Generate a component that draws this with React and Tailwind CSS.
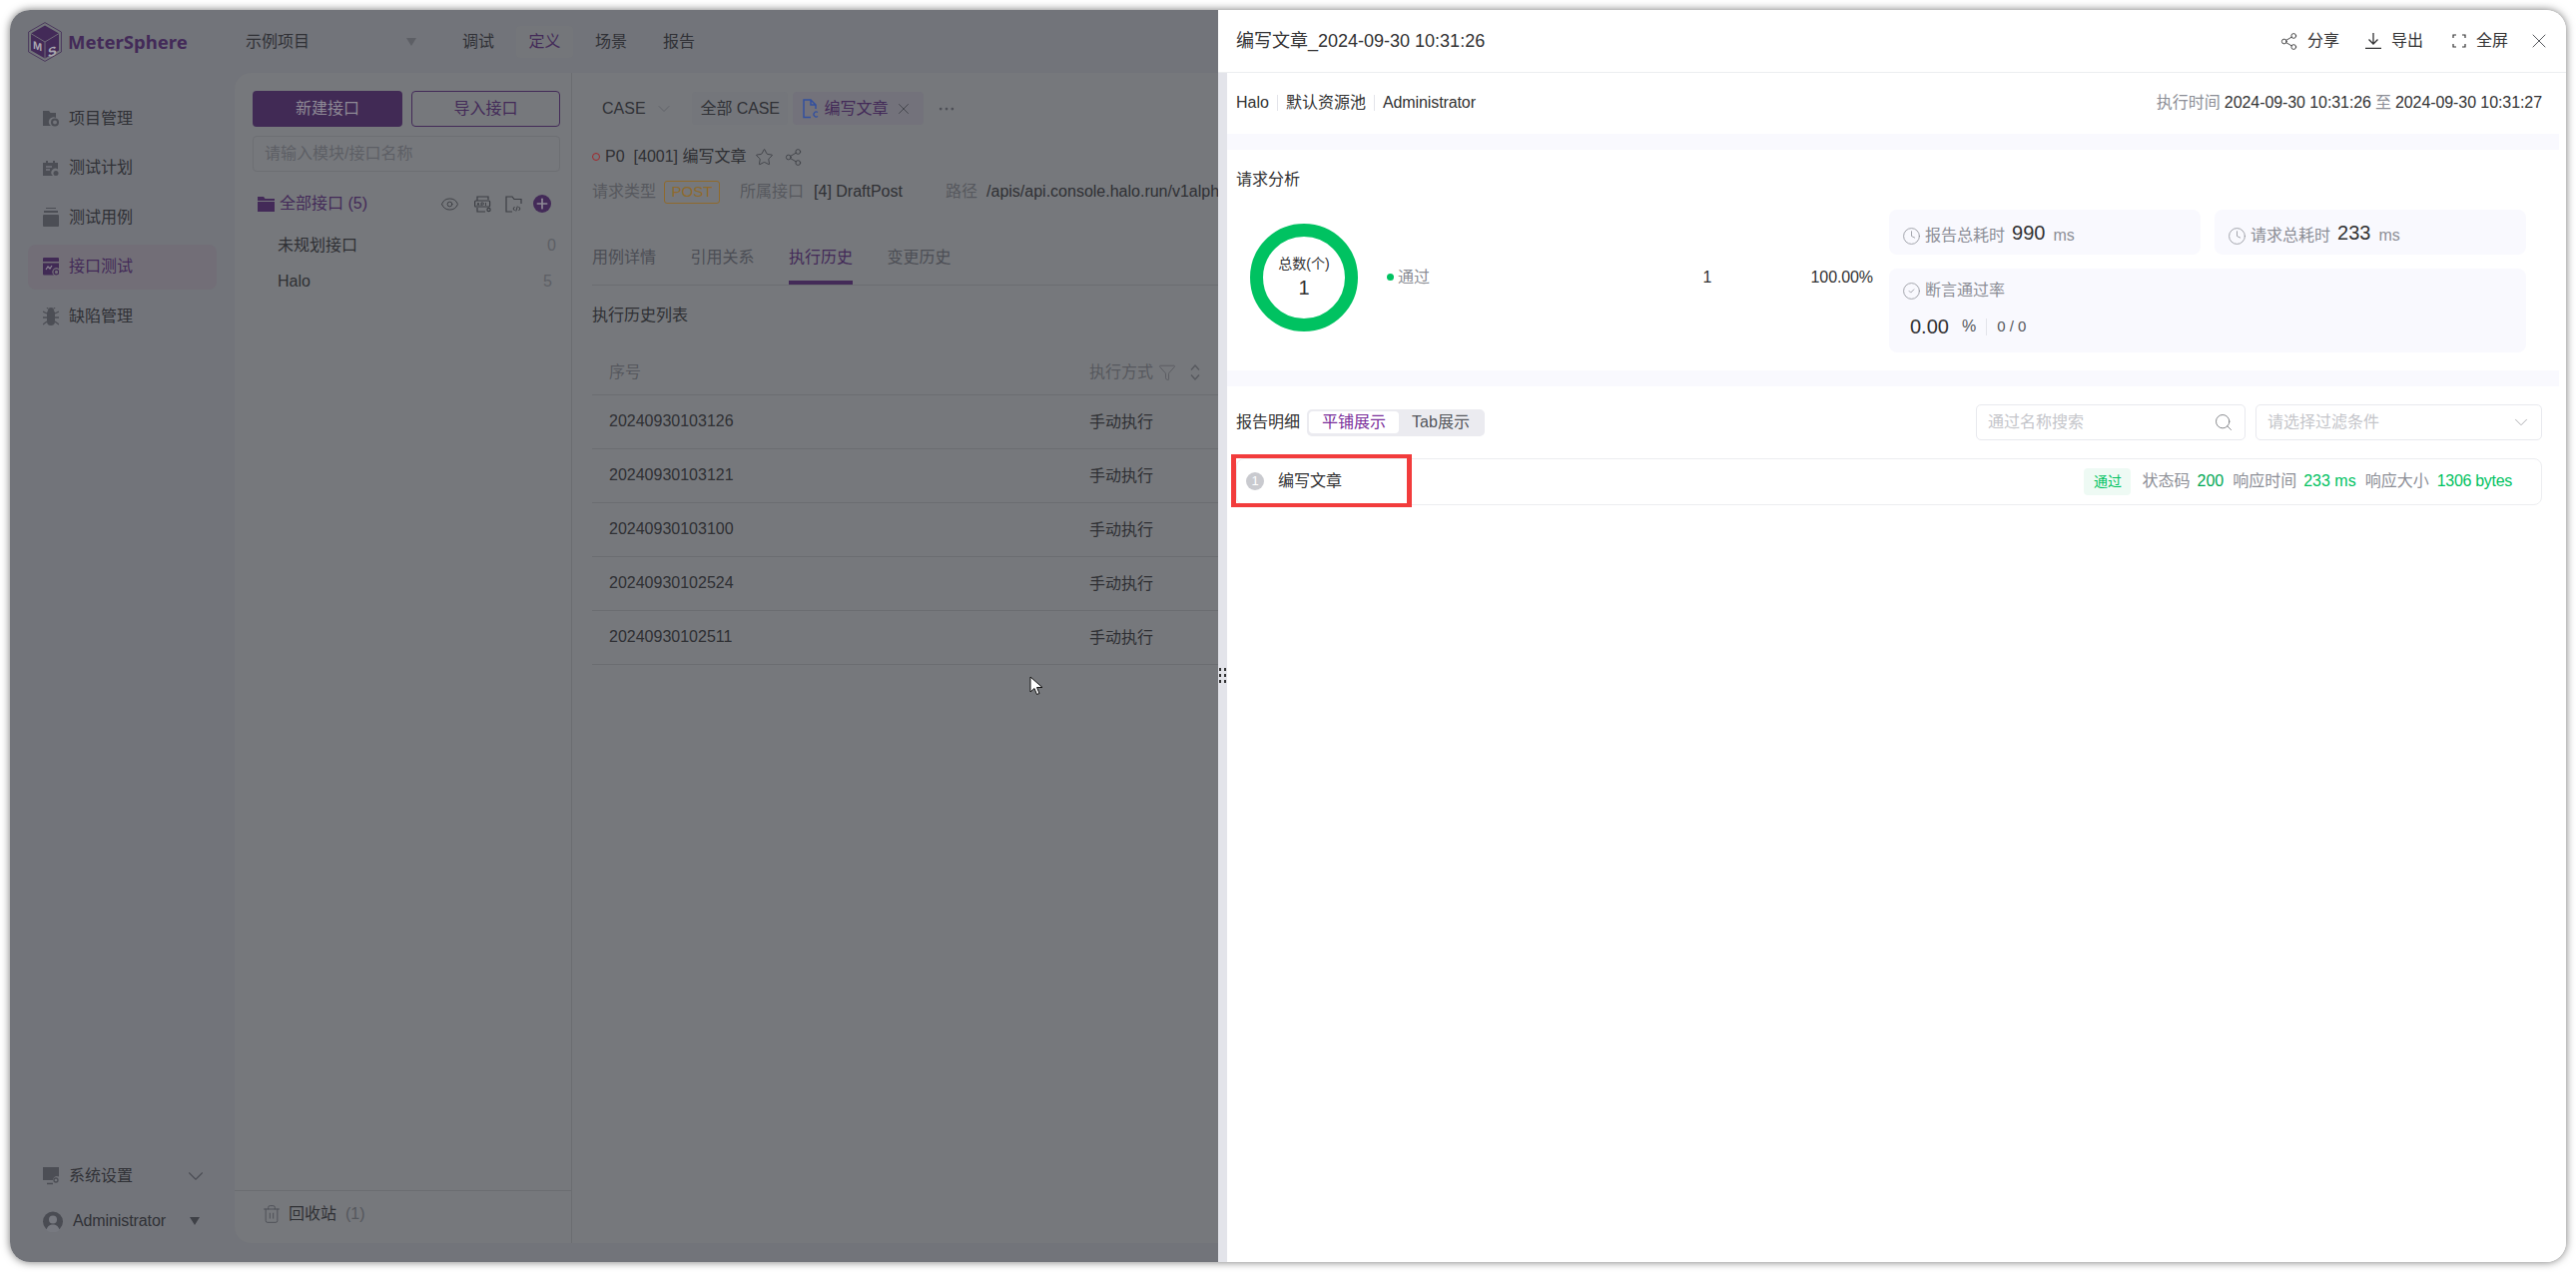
import React from 'react';
import { Eye, Star, Share2, X, ChevronDown, Search, Clock, CircleCheck, Trash2, Funnel, Plus, Ellipsis } from 'lucide-react';

const Logo = () => (
  <svg width="34" height="40" viewBox="0 0 34 40" className="shrink-0">
    <path d="M17 .6 33.4 10v20L17 39.4.6 30V10z" fill="none" stroke="#4c3a5e" strokeWidth="1" />
    <path d="M17 3.5 31 11.6v16.8L17 36.5 3 28.4V11.6z" fill="#432a58" />
    <path d="M17 20 3 11.6M17 20l14-8.4M17 20v16.5" stroke="#6f6a78" strokeWidth="1" />
    <text x="5" y="29" fontSize="11" fontWeight="700" fill="#a9a6b0" fontFamily="Liberation Sans" transform="skewY(18) translate(0 -4)">M</text>
    <text x="20" y="36" fontSize="13" fontWeight="700" fill="#a9a6b0" fontFamily="Liberation Sans" transform="skewY(-18) translate(0 6)">S</text>
  </svg>
);

const IconProject = () => (
  <svg width="16" height="17" viewBox="0 0 16 17"><path d="M0 1h6l1.500 2H13v5a4.500 4.500 0 0 0-5 8H0z" fill="#4c4e55" /><circle cx="12" cy="12.500" r="3" fill="none" stroke="#4c4e55" strokeWidth="2" /></svg>
);
const IconPlan = () => (
  <svg width="16" height="17" viewBox="0 0 16 17"><path d="M0 3h3V1h2v2h5V1h2v2h3v6.500a4 4 0 0 0-5 6.500H0z" fill="#4c4e55" /><path d="M3 7h6M3 10h4" stroke="#74767d" strokeWidth="1.400" /><circle cx="13" cy="13.500" r="2.500" fill="#4c4e55" /></svg>
);
const IconCase = () => (
  <svg width="16" height="19" viewBox="0 0 16 19"><path d="M3 0h10v1H3zM1 3h14v2H1z" fill="#4c4e55" /><rect y="7" width="16" height="12" rx="1" fill="#4c4e55" /></svg>
);
const IconApi = () => (
  <svg width="16" height="18" viewBox="0 0 16 18"><path d="M1 0h14a1 1 0 0 1 1 1v3H0V1a1 1 0 0 1 1-1zM0 5.500h16V11a4 4 0 0 0-5 6.500H1a1 1 0 0 1-1-1z" fill="#412a55" /><path d="M3 12l2-3 2 2 2-3" stroke="#8a8592" strokeWidth="1.200" fill="none" /><circle cx="13.500" cy="14.500" r="2.300" fill="none" stroke="#412a55" strokeWidth="1.300" /></svg>
);
const IconBug = () => (
  <svg width="16" height="18" viewBox="0 0 16 18"><path d="M5 3a3 3 0 0 1 6 0l1 2v9a4 4 0 0 1-8 0V5z" fill="#4c4e55" /><path d="M4 6 0 4M12 6l4-2M4 10H0M12 10h4M4 14l-4 3M12 14l4 3M5 1 4 0M11 1l1-1" stroke="#4c4e55" strokeWidth="1.300" /></svg>
);
const IconSettings = () => (
  <svg width="16" height="18" viewBox="0 0 16 18"><path d="M0 0h16v9.500a4 4 0 0 0-6 3.500H0z" fill="#4c4e55" /><path d="M4 16.500h6" stroke="#4c4e55" strokeWidth="1.500" /><circle cx="13" cy="13" r="2" fill="none" stroke="#4c4e55" strokeWidth="1.300" /></svg>
);
const IconUser = () => (
  <svg width="20" height="21" viewBox="0 0 20 21"><circle cx="10" cy="10.500" r="10" fill="#4a4c53" /><circle cx="10" cy="8.500" r="4" fill="#777980" /><path d="M3.500 19c.8-4 3.500-5.500 6.500-5.500s5.700 1.500 6.500 5.500a10 10 0 0 1-13 0z" fill="#777980" /></svg>
);
const IconFolder = () => (
  <svg width="17" height="16" viewBox="0 0 17 16"><path d="M0 1h6l1.500 2H17v2H0z" fill="#432a58" /><path d="M0 6h17v10H0z" fill="#432a58" /></svg>
);
const IconApiDoc = () => (
  <svg width="17" height="17" viewBox="0 0 17 17" fill="none" stroke="#3d3f45" strokeWidth="1.200"><path d="M3 5V1h11v3M3 12v4h8" /><rect x=".6" y="5" width="15" height="6" rx="1" /><path d="M3 10l1-3 1 3M7 10V7h1.500a1 1 0 0 1 0 2H7M11.500 7v3" strokeWidth=".9" /><circle cx="14.500" cy="14" r="1.600" /></svg>
);
const IconFolderCode = () => (
  <svg width="17" height="17" viewBox="0 0 17 17" fill="none" stroke="#3d3f45" strokeWidth="1.200"><path d="M7 16H1V1h6l2 2.500h7V8" /><path d="M9.500 11 8 13l1.500 2M13.500 11l1.500 2-1.500 2M12.300 10.500l-1.500 5" strokeWidth="1" /></svg>
);
const IconFileC = () => (
  <svg width="16" height="20" viewBox="0 0 16 20" fill="none" stroke="#33509f" strokeWidth="1.500"><path d="M8 18.500H1V1h7l5 5v4M8 1v5h5" /><path d="M15 13.500a2.500 2.500 0 1 0 0 4" strokeWidth="1.300" /></svg>
);
const IconExpand = () => (
  <svg width="14" height="14" viewBox="0 0 14 14" fill="none" stroke="#323233" strokeWidth="1.200"><path d="M1 4V1h3M10 1h3v3M1 10v3h3M10 13h3v-3" /></svg>
);
const IconDownload = () => (
  <svg width="16" height="16" viewBox="0 0 16 16" fill="none" stroke="#323233" strokeWidth="1.300"><path d="M8 0v11M3.500 6.500 8 11l4.500-4.500M0 15.300h16" /></svg>
);
const IconSort = () => (
  <svg width="10" height="16" viewBox="0 0 10 16" fill="none" stroke="#56585e" strokeWidth="1.300"><path d="M1 5.500 5 1l4 4.500M1 10.500 5 15l4-4.500" /></svg>
);
const Triangle = ({ className }) => (
  <svg width="10" height="8" viewBox="0 0 10 8" className={className}><path d="M0 0h10L5 8z" fill="currentColor" /></svg>
);
const Cursor = () => (
  <svg width="14" height="20" viewBox="0 0 14 20"><path d="M1 1v15l4-3.500 2.500 6 2.500-1-2.500-6H13z" fill="#fff" stroke="#111" strokeWidth="1" /></svg>
);

const navItems = [
  ['项目管理', <IconProject />],
  ['测试计划', <IconPlan />],
  ['测试用例', <IconCase />],
  ['接口测试', <IconApi />, true],
  ['缺陷管理', <IconBug />],
];

const rows = ['20240930103126', '20240930103121', '20240930103100', '20240930102524', '20240930102511'];

const Sidebar = () => (
  <aside className="w-[225px] shrink-0 flex flex-col pt-[23px] pb-[26px]">
    <nav className="flex flex-col gap-[4.500px] px-[18px]">
      {navItems.map(([label, icon, active]) => (
        <div key={label} className={`h-[45px] flex items-center gap-[10px] pl-[15px] rounded-[8px] ${active ? 'bg-[#726e77] text-[#432a58]' : 'text-[#303136]'}`}>
          <span className="w-[16px] flex justify-center">{icon}</span>
          <span>{label}</span>
        </div>
      ))}
    </nav>
    <div className="mt-auto flex flex-col gap-[15px] pl-[33px] pr-[26px]">
      <div className="h-[30px] flex items-center gap-[10px] text-[#303136]">
        <IconSettings />
        <span>系统设置</span>
        <ChevronDown size={26} strokeWidth={1} className="ml-auto text-[#4c4e55]" />
      </div>
      <div className="h-[30px] flex items-center gap-[10px] text-[#303136]">
        <IconUser />
        <span className="tracking-[-0.1px]">Administrator</span>
        <Triangle className="ml-auto mr-[9px] text-[#3f4147]" />
      </div>
    </div>
  </aside>
);

const ModulePanel = () => (
  <section className="w-[338px] shrink-0 flex flex-col bg-[#76787c] rounded-l-[16px] border-r border-[#6b6d71]">
    <div className="flex-1 pl-[18px] pr-[11px] pt-[18px]">
      <div className="flex gap-[9px]">
        <button className="w-[150px] h-[36px] rounded-[4px] bg-[#412a55] text-[#8f8a96]">新建接口</button>
        <button className="w-[149px] h-[36px] rounded-[4px] border border-[#432a58] text-[#432a58]">导入接口</button>
      </div>
      <div className="mt-[9px] h-[36px] w-[308px] rounded-[4px] border border-[#6d6f73] pl-[11px] flex items-center text-[#5d5f65]">请输入模块/接口名称</div>
      <div className="mt-[20px] h-[24px] flex items-center pl-[5px] pr-[9px] w-[308px]">
        <IconFolder />
        <span className="ml-[5px] text-[#432a58]">全部接口 (5)</span>
        <Eye size={19} strokeWidth={1.200} className="ml-auto text-[#3d3f45]" />
        <span className="ml-[15px]"><IconApiDoc /></span>
        <span className="ml-[14px]"><IconFolderCode /></span>
        <span className="ml-[11px] w-[18px] h-[18px] rounded-full bg-[#432a58] flex items-center justify-center"><Plus size={16} strokeWidth={2.500} className="text-[#8f8a96]" /></span>
      </div>
      <div className="mt-[18px] flex items-center pl-[25px] pr-[4px] w-[308px] h-[24px] text-[#2f3034]"><span>未规划接口</span><span className="ml-auto text-[#5d5f65]">0</span></div>
      <div className="mt-[12px] flex items-center pl-[25px] pr-[8px] w-[308px] h-[24px] text-[#2f3034]"><span>Halo</span><span className="ml-auto text-[#5d5f65]">5</span></div>
    </div>
    <div className="h-[53px] border-t border-[#6b6d71] flex items-center pl-[27px] pb-[6px] text-[#2f3034]">
      <Trash2 size={20} strokeWidth={1.100} className="text-[#4c4e55]" />
      <span className="ml-[7px]">回收站</span>
      <span className="ml-[9px] text-[#55575c]">(1)</span>
    </div>
  </section>
);

const MainPanel = () => (
  <section className="flex-1 min-w-0 bg-[#76787c] pl-[20px] pt-[19px] overflow-hidden">
    <div className="h-[33px] flex items-center text-[#303136] pl-[10px]">
      <span>CASE</span>
      <ChevronDown size={20} strokeWidth={1} className="ml-[8px] text-[#5d5f65]" />
      <span className="ml-[18px] h-[33px] w-[96px] rounded-[4px] bg-[#74767b] pl-[9px] flex items-center whitespace-nowrap tracking-[-0.1px]">全部 CASE</span>
      <span className="ml-[5px] h-[33px] w-[131px] rounded-[4px] bg-[#73727b] pl-[10px] flex items-center text-[#432a58]">
        <IconFileC />
        <span className="ml-[6px]">编写文章</span>
        <X size={18} strokeWidth={1.100} className="ml-[6px] text-[#3d3f45]" />
      </span>
      <Ellipsis size={20} strokeWidth={1.300} className="ml-[13px] text-[#4c4e55]" />
    </div>
    <div className="mt-[20px] h-[24px] flex items-center text-[#2f3034]">
      <span className="w-[8px] h-[8px] rounded-full border-[1.500px] border-[#a3272c]" />
      <span className="ml-[5px]">P0</span>
      <span className="ml-[9px]">[4001] 编写文章</span>
      <Star size={19} strokeWidth={1.100} className="ml-[8px] text-[#3d3f45]" />
      <Share2 size={19} strokeWidth={1.100} className="ml-[10px] text-[#3d3f45]" />
    </div>
    <div className="mt-[11px] h-[24px] flex items-center whitespace-nowrap [&>*]:shrink-0">
      <span className="text-[#56585e]">请求类型</span>
      <span className="ml-[8px] w-[56px] h-[23px] rounded-[3px] border border-[#8f6a2c] text-[#8f6a2c] flex items-center justify-center text-[15px]">POST</span>
      <span className="ml-[20px] text-[#56585e]">所属接口</span>
      <span className="ml-[10px] w-[132px] text-[#2f3034]">[4] DraftPost</span>
      <span className="text-[#56585e]">路径</span>
      <span className="ml-[9px] text-[#2f3034]">/apis/api.console.halo.run/v1alpha</span>
    </div>
    <div className="mt-[32px] flex gap-[34.500px] border-b border-[#6b6d71] h-[50px]">
      {['用例详情', '引用关系', '执行历史', '变更历史'].map((t) => (
        <span key={t} className={`pt-[10px] pb-[11px] h-[49px] border-b-4 ${t === '执行历史' ? 'border-[#432a58] text-[#432a58]' : 'border-transparent text-[#4c4e55]'}`}>{t}</span>
      ))}
    </div>
    <h3 className="mt-[18px] h-[24px] text-[#2f3034]">执行历史列表</h3>
    <div className="mt-[23px]">
      <div className="grid grid-cols-[498px_1fr] h-[45px] border-b border-[#6b6d71] items-center pb-[1px] text-[#56585e]">
        <span className="pl-[17px]">序号</span>
        <span className="flex items-center">
          执行方式
          <Funnel size={18} strokeWidth={1.100} className="ml-[5px]" />
          <span className="ml-[14px]"><IconSort /></span>
        </span>
      </div>
      {rows.map((r) => (
        <div key={r} className="grid grid-cols-[498px_1fr] h-[54px] border-b border-[#6b6d71] items-center text-[#2f3034]">
          <span className="pl-[17px] pb-[2px]">{r}</span>
          <span>手动执行</span>
        </div>
      ))}
    </div>
  </section>
);

const AppBehind = () => (
  <div className="w-[1210px] shrink-0 h-full flex flex-col bg-[#72747a]">
    <header className="h-[63px] shrink-0 flex items-center pl-[18px] text-[#303136]">
      <Logo />
      <span className="ml-[6px] w-[178px] font-['Noto_Sans'] font-bold text-[18.500px] text-[#432a58]">MeterSphere</span>
      <span className="w-[175px] flex items-center">示例项目<Triangle className="ml-auto mr-[4px] text-[#5d5f65]" /></span>
      <span className="ml-[42px]">调试</span>
      <span className="ml-[22px] h-[32px] w-[57px] flex items-center justify-center rounded-[4px] bg-[#74767a] text-[#432a58]">定义</span>
      <span className="ml-[22px]">场景</span>
      <span className="ml-[36px]">报告</span>
    </header>
    <div className="flex-1 min-h-0 flex">
      <Sidebar />
      <div className="flex-1 min-w-0 flex mb-[19px]">
        <ModulePanel />
        <MainPanel />
      </div>
    </div>
  </div>
);

const StatCard = ({ label, value, gap }) => (
  <div className="h-[45px] rounded-[8px] bg-[#f9f9fe] pl-[13px] pt-[7px] flex items-center">
    <Clock size={19} strokeWidth={1} className="text-[#8c8e96]" />
    <span className={`${gap} text-[#8c8e96]`}>{label}</span>
    <span className="ml-[7px] text-[20px] text-[#323233] pb-[7px]">{value}</span>
    <span className="ml-[8px] text-[#8c8e96]">ms</span>
  </div>
);

const Drawer = () => (
  <div className="flex-1 min-w-0 h-full flex flex-col bg-white text-[#323233]">
    <header className="h-[63px] shrink-0 border-b border-[#eceef0] flex items-center pl-[18px] pr-[15px]">
      <h2 className="text-[18px]">编写文章_2024-09-30 10:31:26</h2>
      <span className="ml-auto flex items-center gap-[9px]"><Share2 size={19} strokeWidth={1.100} />分享</span>
      <span className="ml-[26px] flex items-center gap-[10px]"><IconDownload />导出</span>
      <span className="ml-[29px] flex items-center gap-[10px]"><IconExpand />全屏</span>
      <X size={24} strokeWidth={1} className="ml-[19px] text-[#55575c]" />
    </header>
    <div className="flex-1 min-h-0 flex">
      <div className="w-[9px] shrink-0 bg-[#e3e4ea] flex items-center justify-center pt-[16px]">
        <div className="grid grid-cols-2 gap-x-[3px] gap-y-[3px]">
          {[0, 1, 2, 3, 4, 5].map((i) => <span key={i} className="w-[2px] h-[3px] bg-[#323233]" />)}
        </div>
      </div>
      <div className="flex-1 min-w-0 mr-[7px]">
        <div className="h-[61px] pl-[9px] pr-[17px] pb-[1px] flex items-center">
          <span>Halo</span>
          <span className="mx-[8px] h-[16px] w-px bg-[#e3e4ea]" />
          <span>默认资源池</span>
          <span className="mx-[8px] h-[16px] w-px bg-[#e3e4ea]" />
          <span className="tracking-[-0.1px]">Administrator</span>
          <span className="ml-auto text-[#8c8e96]">执行时间</span>
          <span className="ml-[4px] tracking-[-0.08px]">2024-09-30 10:31:26</span>
          <span className="mx-[4px] text-[#8c8e96]">至</span>
          <span className="tracking-[-0.08px]">2024-09-30 10:31:27</span>
        </div>
        <div className="h-[16px] bg-[#f9f9fe]" />
        <div className="h-[221px] pl-[9px] pr-[33px] pt-[18px]">
          <h3 className="h-[24px]">请求分析</h3>
          <div className="mt-[18px] flex">
            <div className="flex-1 flex items-center pl-[14px] pr-[16px] pb-[8px]">
              <div className="w-[108px] h-[108px] rounded-full border-[13px] border-[#00c261] flex flex-col items-center justify-center shrink-0">
                <span className="text-[14px] leading-[20px] whitespace-nowrap">总数(个)</span>
                <span className="text-[20px] leading-[28px]">1</span>
              </div>
              <div className="ml-[29px] flex-1 flex items-center">
                <span className="w-[7px] h-[7px] rounded-full bg-[#00c261]" />
                <span className="ml-[4px] text-[#8c8e96]">通过</span>
                <span className="ml-auto w-[108px]">1</span>
                <span className="tracking-[-0.1px]">100.00%</span>
              </div>
            </div>
            <div className="w-[638px] shrink-0">
              <div className="grid grid-cols-2 gap-[14px]">
                <StatCard label="报告总耗时" value="990" gap="ml-[4px]" />
                <StatCard label="请求总耗时" value="233" gap="ml-[4px]" />
              </div>
              <div className="mt-[14px] h-[84px] rounded-[8px] bg-[#f9f9fe] pt-[10px]">
                <div className="h-[24px] pl-[13px] flex items-center text-[#8c8e96]">
                  <CircleCheck size={19} strokeWidth={1} />
                  <span className="ml-[4px]">断言通过率</span>
                </div>
                <div className="mt-[12px] h-[24px] pl-[21px] flex items-center">
                  <span className="text-[20px]">0.00</span>
                  <span className="ml-[13px] text-[#55575c]">%</span>
                  <span className="ml-[10px] h-[17px] w-px bg-[#e3e4ea]" />
                  <span className="ml-[10px] text-[15px] text-[#55575c]">0 / 0</span>
                </div>
              </div>
            </div>
          </div>
        </div>
        <div className="h-[16px] bg-[#f9f9fe]" />
        <div className="pl-[9px] pr-[17px] pt-[18px]">
          <div className="h-[36px] flex items-center">
            <span>报告明细</span>
            <div className="ml-[7px] w-[178px] h-[27px] rounded-[5px] bg-[#ebebf0] p-[2px] flex items-center">
              <span className="w-[90px] h-[22px] rounded-[4px] bg-white text-[#7a2e9a] flex items-center justify-center">平铺展示</span>
              <span className="flex-1 text-center text-[#55575c]">Tab展示</span>
            </div>
            <div className="ml-auto w-[270px] h-[36px] rounded-[5px] border border-[#e8e9ee] pl-[11px] pr-[11px] flex items-center text-[#c4c5ca]">
              通过名称搜索
              <Search size={20} strokeWidth={1} className="ml-auto text-[#6f7176]" />
            </div>
            <div className="ml-[10px] w-[287px] h-[36px] rounded-[5px] border border-[#e8e9ee] pl-[11px] pr-[9px] flex items-center text-[#c4c5ca]">
              请选择过滤条件
              <ChevronDown size={22} strokeWidth={1} className="ml-auto text-[#a8a9ae]" />
            </div>
          </div>
          <div className="relative mt-[18px] h-[47px] rounded-[8px] border border-[#ecedf0] pl-[9px] pr-[29px] pb-[1px] flex items-center">
            <span className="w-[18px] h-[18px] rounded-full bg-[#c9cacf] text-white text-[13px] flex items-center justify-center">1</span>
            <span className="ml-[14px]">编写文章</span>
            <span className="ml-auto w-[47px] h-[27px] rounded-[4px] bg-[#eefaf4] text-[#00c261] text-[14px] flex items-center justify-center">通过</span>
            <span className="ml-[11px] text-[#8c8e96]">状态码</span>
            <span className="ml-[7px] text-[#00a854]">200</span>
            <span className="ml-[9px] text-[#8c8e96]">响应时间</span>
            <span className="ml-[7px] text-[#00c261]">233 ms</span>
            <span className="ml-[9px] text-[#8c8e96]">响应大小</span>
            <span className="ml-[8px] text-[#00c261] tracking-[-0.3px]">1306 bytes</span>
            <div className="absolute -left-[6px] -top-[5px] w-[181px] h-[53px] border-x-[5px] border-y-[4px] border-[#f23c3c]" />
          </div>
        </div>
      </div>
    </div>
  </div>
);

export default function App() {
  return (
    <div className="w-[2580px] h-[1274px] bg-white p-[10px] text-[16px] leading-[24px] [font-family:'Liberation_Sans','Noto_Sans_CJK_SC',sans-serif] overflow-hidden">
      <div className="relative w-full h-full rounded-[20px] overflow-hidden flex shadow-[0_0_8px_rgba(0,0,0,0.55)]">
        <AppBehind />
        <Drawer />
        <span className="absolute left-[1021px] top-[667px]"><Cursor /></span>
      </div>
    </div>
  );
}
